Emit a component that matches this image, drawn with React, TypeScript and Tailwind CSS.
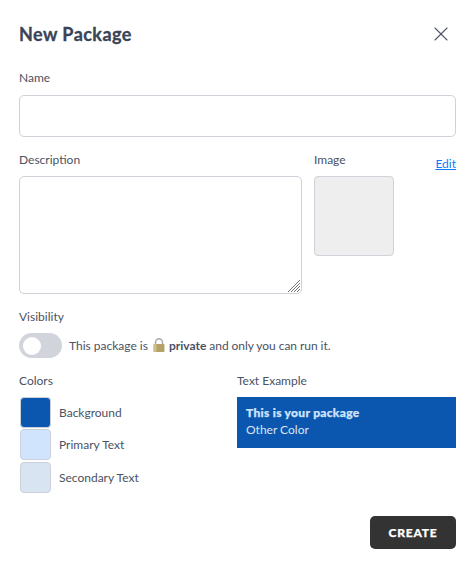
import { X } from "lucide-react";

function Swatch({ color, label, className }: { color: string; label: string; className: string }) {
  return (
    <div className={`flex items-center gap-[8px] ${className}`}>
      <div className={`h-[31px] w-[31px] rounded-[4px] border-[1.5px] border-[#cbd0da] ${color}`} />
      <span className="text-[12px] text-[#4a5263]">{label}</span>
    </div>
  );
}

function LockIcon() {
  return (
    <svg width="12" height="14" viewBox="0 0 12 14" className="ml-[5px] mr-[4px] inline-block align-[-2px]">
      <path d="M2.5 7V4.2a3.5 3.5 0 0 1 7 0V7" fill="none" stroke="#a9a9a6" strokeWidth="1.5" />
      <rect x="0.5" y="6" width="11" height="8" rx="1" fill="#b5a268" />
      <rect x="0.5" y="6" width="3" height="8" rx="1" fill="#d0c08c" />
    </svg>
  );
}

export default function App() {
  return (
    <div className="h-[576px] w-[475px] bg-white px-[19px] pt-[22px] font-['Lato',sans-serif] text-[#4a5263]">
      <div className="flex h-[24px] items-center justify-between">
        <h1 className="text-[18px] font-bold tracking-[0.45px] text-[#3a4456] [-webkit-text-stroke:0.3px_#3a4456]">New Package</h1>
        <X size={24} strokeWidth={1.1} className="mr-[3px] text-[#4b5563]" />
      </div>

      <label className="mt-[24px] block text-[12px] leading-[16px]">Name</label>
      <input className="mt-[9px] block h-[42px] w-[437px] rounded-[5px] border border-[#d1d1da] bg-white" />

      <div className="mt-[15px] flex">
        <div className="w-[283px]">
          <label className="block text-[12px] leading-[16px]">Description</label>
          <div className="relative mt-[8px]">
            <textarea className="block h-[118px] w-[283px] resize-none rounded-[5px] border border-[#d1d1da] bg-white" />
            <svg width="14" height="14" viewBox="0 0 14 14" className="absolute bottom-[1px] right-[1px]" stroke="#777777" strokeWidth="1">
              <path d="M1 13 13 1M4 13l9-9M7 13l6-6M10 13l3-3" />
            </svg>
          </div>
        </div>
        <div className="ml-[12px] w-[80px]">
          <label className="block text-[12px] leading-[16px]">Image</label>
          <div className="mt-[8px] h-[80px] w-[80px] rounded-[4px] border border-[#d1d1da] bg-[#eeeeee]" />
        </div>
        <a className="ml-auto mt-[4px] text-[12px] leading-[16px] text-[#0a7cff] underline">Edit</a>
      </div>

      <label className="mt-[15px] block text-[12px] leading-[16px]">Visibility</label>
      <div className="mt-[8px] flex items-center">
        <div className="flex h-[25px] w-[43px] items-center rounded-full bg-[#d1d5db] pl-[4px]">
          <div className="h-[18px] w-[18px] rounded-full bg-white" />
        </div>
        <p className="ml-[7px] text-[12px]">
          This package is
          <LockIcon />
          <span className="font-bold">private</span>
          <span className="tracking-[-0.05px]"> and only you can run it.</span>
        </p>
      </div>

      <div className="mt-[15px] flex">
        <div className="w-[218px]">
          <label className="block text-[12px] leading-[16px]">Colors</label>
          <div className="mt-[8px] pl-[1px]">
            <Swatch color="bg-[#0b57b0]" label="Background" className="" />
            <Swatch color="bg-[#d0e4fd]" label="Primary Text" className="mt-[1px]" />
            <Swatch color="bg-[#d9e4f2]" label="Secondary Text" className="mt-[2px]" />
          </div>
        </div>
        <div className="w-[219px]">
          <label className="block text-[12px] leading-[16px]">Text Example</label>
          <div className="mt-[8px] h-[51px] w-[219px] bg-[#0b57b0] px-[9px] pt-[7px] text-[12px] leading-[17px]">
            <div className="font-black tracking-[0.3px] text-[#d0e4fd] [-webkit-text-stroke:0.25px_#d0e4fd]">This is your package</div>
            <div className="text-[#d9e4f2]">Other Color</div>
          </div>
        </div>
      </div>

      <div className="mt-[23px] flex justify-end">
        <button className="h-[33px] w-[86px] rounded-[5px] bg-[#333333] text-[12px] font-black tracking-[0.8px] text-white [-webkit-text-stroke:0.25px_#ffffff]">
          CREATE
        </button>
      </div>
    </div>
  );
}
